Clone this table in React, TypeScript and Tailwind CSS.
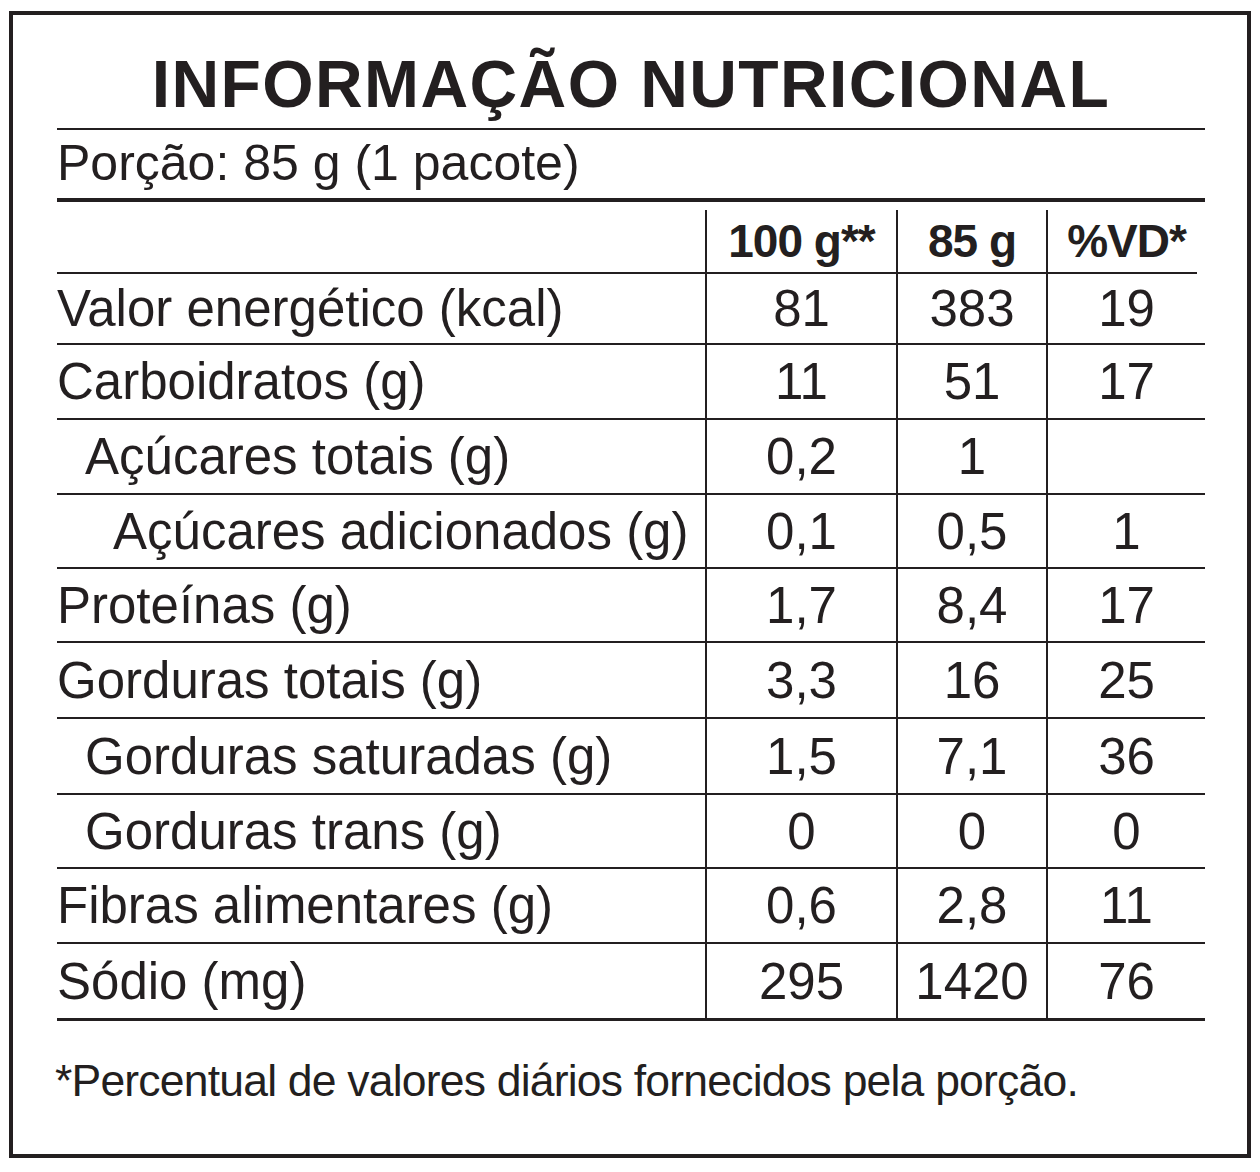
const rows = [
  { label: "Valor energético (kcal)", indent: "", a: "81", b: "383", c: "19", h: "h-[71px]", line: "border-b-2" },
  { label: "Carboidratos (g)", indent: "", a: "11", b: "51", c: "17", h: "h-[75px]", line: "border-b-2" },
  { label: "Açúcares totais (g)", indent: "pl-[28px]", a: "0,2", b: "1", c: "", h: "h-[75px]", line: "border-b-2" },
  { label: "Açúcares adicionados (g)", indent: "pl-[56px]", a: "0,1", b: "0,5", c: "1", h: "h-[74px]", line: "border-b-2" },
  { label: "Proteínas (g)", indent: "", a: "1,7", b: "8,4", c: "17", h: "h-[74px]", line: "border-b-2" },
  { label: "Gorduras totais (g)", indent: "", a: "3,3", b: "16", c: "25", h: "h-[76px]", line: "border-b-2" },
  { label: "Gorduras saturadas (g)", indent: "pl-[28px]", a: "1,5", b: "7,1", c: "36", h: "h-[76px]", line: "border-b-2" },
  { label: "Gorduras trans (g)", indent: "pl-[28px]", a: "0", b: "0", c: "0", h: "h-[74px]", line: "border-b-2" },
  { label: "Fibras alimentares (g)", indent: "", a: "0,6", b: "2,8", c: "11", h: "h-[75px]", line: "border-b-2" },
  { label: "Sódio (mg)", indent: "", a: "295", b: "1420", c: "76", h: "h-[77px]", line: "border-b-[3px]" },
];

const App = () => {
  return (
    <div className="w-[1260px] h-[1172px] bg-white pl-[9px] pt-[11px] font-['Liberation_Sans',Arial,sans-serif] text-[#231f20]">
      <div className="w-[1242px] h-[1147px] border-4 border-[#231f20] pl-[44px] pr-[42px] pt-[36px]">
        {/* Title */}
        <h1 className="text-center text-[66px] leading-[66px] font-bold tracking-[1.4px]">
          INFORMAÇÃO NUTRICIONAL
        </h1>
        <div className="mt-[11px] h-[2px] bg-[#231f20]" />

        {/* Portion */}
        <div className="mt-[8px] text-[50px] leading-[50px]">Porção: 85 g (1 pacote)</div>
        <div className="mt-[10px] h-[4px] bg-[#231f20]" />

        {/* Table */}
        <div className="mt-[8px]">
          <div className="grid grid-cols-[648px_191px_150px_159px] h-[64px] text-[46px] leading-[46px] font-bold tracking-[-1px]">
            <div className="border-b-2 border-[#231f20]" />
            <div className="flex items-center justify-center border-l-2 border-b-2 border-[#231f20]">100 g**</div>
            <div className="flex items-center justify-center border-l-2 border-b-2 border-[#231f20]">85 g</div>
            <div className="flex items-center justify-center border-l-2 border-b-2 border-[#231f20] mr-[8px] pl-[8px]">%VD*</div>
          </div>
          {rows.map((r) => (
            <div
              key={r.label}
              className={`grid grid-cols-[648px_191px_150px_159px] text-[51px] leading-[51px] ${r.h}`}
            >
              <div className={`flex items-center border-[#231f20] ${r.line} ${r.indent}`}>{r.label}</div>
              <div className={`flex items-center justify-center border-l-2 border-[#231f20] ${r.line}`}>{r.a}</div>
              <div className={`flex items-center justify-center border-l-2 border-[#231f20] ${r.line}`}>{r.b}</div>
              <div className={`flex items-center justify-center border-l-2 border-[#231f20] ${r.line}`}>{r.c}</div>
            </div>
          ))}
        </div>

        {/* Footnote */}
        <div className="mt-[37px] -ml-[2px] text-[44.5px] leading-[46px] tracking-[-0.8px]">
          *Percentual de valores diários fornecidos pela porção.
        </div>
      </div>
    </div>
  );
};

export default App;
